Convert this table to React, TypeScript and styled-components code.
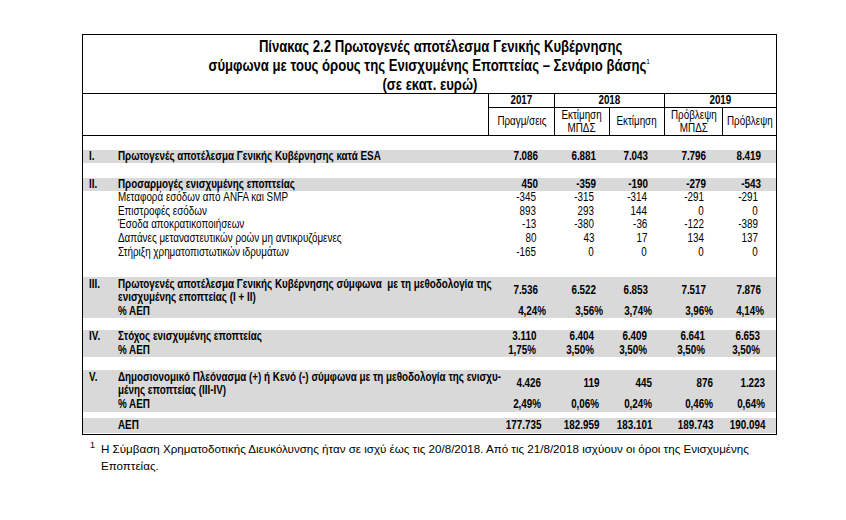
import React from 'react';
import styled, { createGlobalStyle } from 'styled-components';

const GlobalStyle = createGlobalStyle`
  html, body { margin: 0; padding: 0; background: #fff; }
  body { font-family: "Liberation Sans", Arial, sans-serif; color: #000; }
`;

const COLS = '405px 66px 55px 55px 58px 54px';
const GRAY = '#d9d9d9';
const SCALE = 0.82;

const Page = styled.div`
  padding: 34px 0 0 82px;
  width: 760px;
`;

const Table = styled.div`
  width: 693px;
  border: 1px solid #000;
  padding-bottom: 1px;
`;

/* Arial-Narrow-like text: Liberation Sans compressed horizontally */
const Narrow = styled.span<{ $origin?: string }>`
  display: inline-block;
  white-space: nowrap;
  transform: scaleX(${SCALE});
  transform-origin: ${(p) => p.$origin ?? 'left'} center;
`;

const TitleBlock = styled.div`
  height: 59px;
  border-bottom: 1px solid #000;
  display: flex;
  flex-direction: column;
  align-items: center;
  justify-content: center;
  font-size: 16px;
  font-weight: bold;
  line-height: 19px;
  padding-top: 2px;
  box-sizing: border-box;
`;

const TitleLine = styled(Narrow)<{ $shift?: number }>`
  margin-left: ${(p) => p.$shift ?? 0}px;
`;

const Sup = styled.sup`
  font-size: 8px;
  font-weight: normal;
  vertical-align: 7px;
  line-height: 0;
`;

const HeaderGrid = styled.div`
  display: grid;
  grid-template-columns: ${COLS};
  grid-template-rows: 14px 27px;
  border-bottom: 1px solid #000;
  font-size: 12px;
`;

const LabelHead = styled.div`
  grid-row: 1 / span 2;
  grid-column: 1;
`;

const YearCell = styled.div<{ $col: string }>`
  grid-row: 1;
  grid-column: ${(p) => p.$col};
  border-left: 1px solid #000;
  border-bottom: 1px solid #000;
  font-weight: bold;
  text-align: center;
  line-height: 13px;
`;

const SubHead = styled.div`
  grid-row: 2;
  border-left: 1px solid #000;
  display: flex;
  align-items: center;
  justify-content: center;
  text-align: center;
  line-height: 13px;
`;

const Body = styled.div`
  font-size: 12px;
`;

const Section = styled.div<{ $top: number; $shade?: boolean }>`
  margin-top: ${(p) => p.$top}px;
  background: ${(p) => (p.$shade ? GRAY : 'transparent')};
`;

const Row = styled.div<{ $h: number; $bold?: boolean; $shade?: boolean }>`
  display: grid;
  grid-template-columns: ${COLS};
  height: ${(p) => p.$h}px;
  align-items: center;
  font-weight: ${(p) => (p.$bold ? 'bold' : 'normal')};
  background: ${(p) => (p.$shade ? GRAY : 'transparent')};
`;

const LabelCell = styled.div`
  display: flex;
  align-items: flex-start;
  padding-left: 6px;
  line-height: 13px;
  white-space: nowrap;
  min-width: 0;
`;

const Numeral = styled.span`
  width: 29px;
  flex: none;
  font-weight: bold;
`;

const ValueCell = styled.div<{ $pad: number }>`
  text-align: right;
  padding-right: ${(p) => p.$pad}px;
  line-height: 13px;
`;

const Footnote = styled.div`
  font-size: 11.6px;
  line-height: 17px;
  padding: 5px 0 0 8px;
  display: flex;
`;

const FootMark = styled.span`
  font-size: 9px;
  width: 11px;
  flex: none;
  line-height: 10px;
`;

type Pads = number[];
const PAD_BASE: Pads = [16, 13, 16, 16, 15];
const PAD_SUB: Pads = [18, 15, 17, 18, 18];
const PAD_PCT3: Pads = [8, 6, 12, 9, 12];
const PAD_IV: Pads = [18, 15, 17, 17, 16];
const PAD_V: Pads = [13, 10, 12, 9, 11];

const Values: React.FC<{ vals: string[]; pads: Pads }> = ({ vals, pads }) => (
  <>
    {vals.map((v, i) => (
      <ValueCell key={i} $pad={pads[i]}>
        <Narrow $origin="right">{v}</Narrow>
      </ValueCell>
    ))}
  </>
);

const Label: React.FC<{ num?: string; lines: string[] }> = ({ num, lines }) => (
  <LabelCell>
    <Numeral>{num ? <Narrow>{num}</Narrow> : null}</Numeral>
    <span>
      {lines.map((l, i) => (
        <React.Fragment key={i}>
          {i > 0 && <br />}
          <Narrow>{l}</Narrow>
        </React.Fragment>
      ))}
    </span>
  </LabelCell>
);

const subs: [string, string[]][] = [
  ['Μεταφορά εσόδων από ANFA και SMP', ['-345', '-315', '-314', '-291', '-291']],
  ['Επιστροφές εσόδων', ['893', '293', '144', '0', '0']],
  ['Έσοδα αποκρατικοποιήσεων', ['-13', '-380', '-36', '-122', '-389']],
  ['Δαπάνες μεταναστευτικών ροών μη αντικρυζόμενες', ['80', '43', '17', '134', '137']],
  ['Στήριξη χρηματοπιστωτικών ιδρυμάτων', ['-165', '0', '0', '0', '0']],
];

export default function App() {
  return (
    <>
      <GlobalStyle />
      <Page>
        <Table>
          <TitleBlock>
            <TitleLine $origin="center" $shift={22}>
              Πίνακας 2.2 Πρωτογενές αποτέλεσμα Γενικής Κυβέρνησης
            </TitleLine>
            <TitleLine $origin="center">
              σύμφωνα με τους όρους της Ενισχυμένης Εποπτείας – Σενάριο βάσης<Sup>1</Sup>
            </TitleLine>
            <TitleLine $origin="center">(σε εκατ. ευρώ)</TitleLine>
          </TitleBlock>
          <HeaderGrid>
            <LabelHead />
            <YearCell $col="2">
              <Narrow $origin="center">2017</Narrow>
            </YearCell>
            <YearCell $col="3 / span 2">
              <Narrow $origin="center">2018</Narrow>
            </YearCell>
            <YearCell $col="5 / span 2">
              <Narrow $origin="center">2019</Narrow>
            </YearCell>
            <SubHead>
              <Narrow $origin="center">Πραγμ/σεις</Narrow>
            </SubHead>
            <SubHead>
              <Narrow $origin="center">
                Εκτίμηση
                <br />
                ΜΠΔΣ
              </Narrow>
            </SubHead>
            <SubHead>
              <Narrow $origin="center">Εκτίμηση</Narrow>
            </SubHead>
            <SubHead>
              <Narrow $origin="center">
                Πρόβλεψη
                <br />
                ΜΠΔΣ
              </Narrow>
            </SubHead>
            <SubHead>
              <Narrow $origin="center">Πρόβλεψη</Narrow>
            </SubHead>
          </HeaderGrid>
          <Body>
            <Section $top={14}>
              <Row $h={13} $bold $shade>
                <Label num="I." lines={['Πρωτογενές αποτέλεσμα Γενικής Κυβέρνησης κατά ESA']} />
                <Values vals={['7.086', '6.881', '7.043', '7.796', '8.419']} pads={PAD_BASE} />
              </Row>
            </Section>
            <Section $top={15}>
              <Row $h={13} $bold $shade>
                <Label num="II." lines={['Προσαρμογές ενισχυμένης εποπτείας']} />
                <Values vals={['450', '-359', '-190', '-279', '-543']} pads={PAD_BASE} />
              </Row>
              {subs.map(([label, vals]) => (
                <Row key={label} $h={13.6}>
                  <Label lines={[label]} />
                  <Values vals={vals} pads={PAD_SUB} />
                </Row>
              ))}
            </Section>
            <Section $top={18} $shade>
              <Row $h={28} $bold>
                <Label
                  num="III."
                  lines={[
                    'Πρωτογενές αποτέλεσμα Γενικής Κυβέρνησης σύμφωνα\u00a0 με τη μεθοδολογία της',
                    'ενισχυμένης εποπτείας (I + II)',
                  ]}
                />
                <Values vals={['7.536', '6.522', '6.853', '7.517', '7.876']} pads={PAD_BASE} />
              </Row>
              <Row $h={13} $bold>
                <Label lines={['% ΑΕΠ']} />
                <Values vals={['4,24%', '3,56%', '3,74%', '3,96%', '4,14%']} pads={PAD_PCT3} />
              </Row>
            </Section>
            <Section $top={12} $shade>
              <Row $h={14} $bold>
                <Label num="IV." lines={['Στόχος ενισχυμένης εποπτείας']} />
                <Values vals={['3.110', '6.404', '6.409', '6.641', '6.653']} pads={PAD_IV} />
              </Row>
              <Row $h={13} $bold>
                <Label lines={['% ΑΕΠ']} />
                <Values vals={['1,75%', '3,50%', '3,50%', '3,50%', '3,50%']} pads={PAD_IV} />
              </Row>
            </Section>
            <Section $top={13} $shade>
              <Row $h={28} $bold>
                <Label
                  num="V."
                  lines={[
                    'Δημοσιονομικό Πλεόνασμα (+) ή Κενό (-) σύμφωνα με τη μεθοδολογία της ενισχυ-',
                    'μένης εποπτείας (III-IV)',
                  ]}
                />
                <Values vals={['4.426', '119', '445', '876', '1.223']} pads={PAD_V} />
              </Row>
              <Row $h={14} $bold>
                <Label lines={['% ΑΕΠ']} />
                <Values vals={['2,49%', '0,06%', '0,24%', '0,46%', '0,64%']} pads={PAD_V} />
              </Row>
            </Section>
            <Section $top={6} $shade>
              <Row $h={15} $bold>
                <Label lines={['ΑΕΠ']} />
                <Values vals={['177.735', '182.959', '183.101', '189.743', '190.094']} pads={PAD_V} />
              </Row>
            </Section>
          </Body>
        </Table>
        <Footnote>
          <FootMark>1</FootMark>
          <div>
            Η Σύμβαση Χρηματοδοτικής Διευκόλυνσης ήταν σε ισχύ έως τις 20/8/2018. Από τις 21/8/2018 ισχύουν οι όροι της Ενισχυμένης
            <br />
            Εποπτείας.
          </div>
        </Footnote>
      </Page>
    </>
  );
}
